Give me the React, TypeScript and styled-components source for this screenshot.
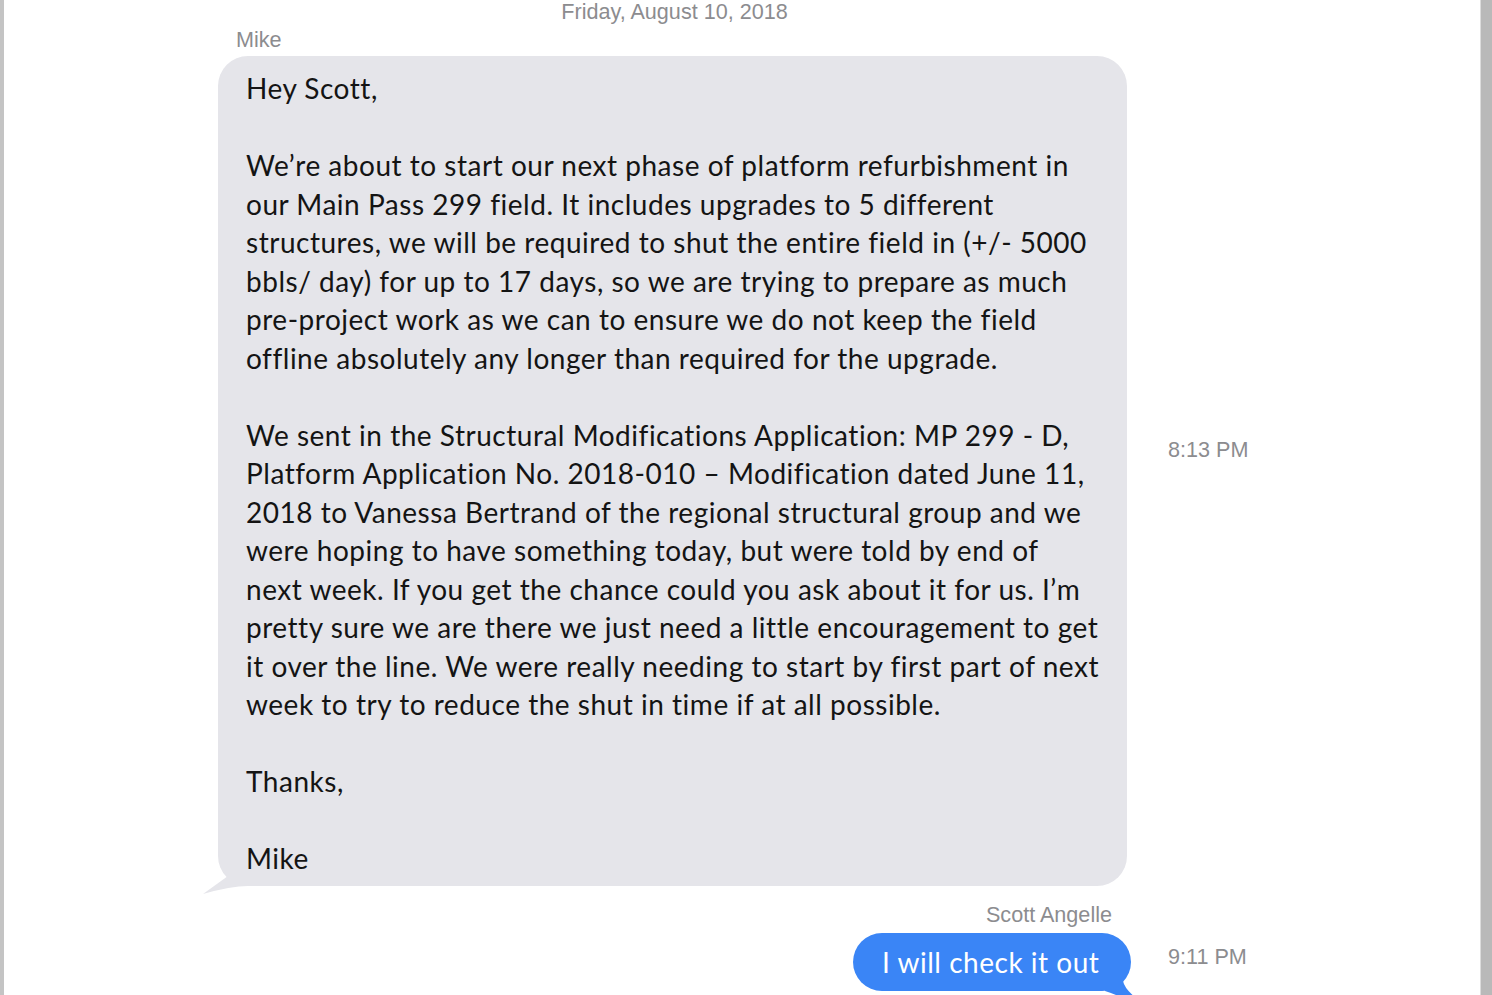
import React from "react";
import styled, { createGlobalStyle } from "styled-components";

const GlobalStyle = createGlobalStyle`
  html, body {
    margin: 0;
    padding: 0;
    height: 100%;
    overflow: hidden;
    background: #ffffff;
  }
  #root {
    height: 100%;
  }
`;

const Frame = styled.div`
  display: flex;
  height: 995px;
  overflow: hidden;
  background: #ffffff;
`;

const LeftEdge = styled.div`
  width: 4px;
  flex: none;
  background: #c4c4c4;
`;

const RightEdge = styled.div`
  width: 11px;
  flex: none;
  background: #b9b9b9;
  border-left: 1px solid #dcdcdc;
`;

const Main = styled.div`
  flex: 1;
  padding-left: 214px;
  display: flex;
  flex-direction: column;
`;

const MetaText = styled.div<{ $align?: "left" | "center" | "right" }>`
  font-family: "Liberation Sans", Arial, sans-serif;
  font-size: 21.6px;
  line-height: 24px;
  color: #8c8c8f;
  text-align: ${(p) => p.$align ?? "left"};
`;

const DateHeader = styled(MetaText)`
  width: 913px;
  margin-top: 0px;
`;

const SenderName = styled(MetaText)`
  width: 913px;
  box-sizing: border-box;
  padding: ${(p) => (p.$align === "right" ? "0 19px 0 0" : "0 0 0 18px")};
  margin-top: ${(p) => (p.$align === "right" ? "17px" : "4px")};
`;

const Row = styled.div`
  display: grid;
  grid-template-columns: 913px auto;
  column-gap: 37px;
`;

const Bubble = styled.div<{ $out?: boolean }>`
  position: relative;
  box-sizing: border-box;
  font-family: "Lato", "Open Sans", sans-serif;
  font-size: 28px;
  line-height: 38.5px;
  letter-spacing: 0.52px;
  font-variant-ligatures: none;
  justify-self: ${(p) => (p.$out ? "end" : "start")};
  background: ${(p) => (p.$out ? "#3a85f6" : "#e5e5ea")};
  color: ${(p) => (p.$out ? "#ffffff" : "#141414")};
  border-radius: ${(p) => (p.$out ? "29px" : "30px")};
  width: ${(p) => (p.$out ? "278px" : "909px")};
  padding: ${(p) => (p.$out ? "10px 0 10px 29px" : "13px 0 8px 28px")};
  margin-top: ${(p) => (p.$out ? "6px" : "4px")};
`;

const Paragraph = styled.div`
  & + & {
    margin-top: 38.5px;
  }
`;

const Line = styled.div`
  white-space: nowrap;
`;

const Tail = styled.svg<{ $out?: boolean }>`
  position: absolute;
  ${(p) =>
    p.$out
      ? `right: -14px; bottom: -12px;`
      : `left: -15px; bottom: -9px;`}
`;

const Time = styled(MetaText)<{ $lift: number }>`
  align-self: center;
  margin-bottom: ${(p) => p.$lift}px;
`;

const paragraphs: string[][] = [
  ["Hey Scott,"],
  [
    "We\u2019re about to start our next phase of platform refurbishment in",
    "our Main Pass 299 field. It includes upgrades to 5 different",
    "structures, we will be required to shut the entire field in (+/- 5000",
    "bbls/ day) for up to 17 days, so we are trying to prepare as much",
    "pre-project work as we can to ensure we do not keep the field",
    "offline absolutely any longer than required for the upgrade.",
  ],
  [
    "We sent in the Structural Modifications Application: MP 299 - D,",
    "Platform Application No. 2018-010 \u2013 Modification dated June 11,",
    "2018 to Vanessa Bertrand of the regional structural group and we",
    "were hoping to have something today, but were told by end of",
    "next week. If you get the chance could you ask about it for us. I\u2019m",
    "pretty sure we are there we just need a little encouragement to get",
    "it over the line. We were really needing to start by first part of next",
    "week to try to reduce the shut in time if at all possible.",
  ],
  ["Thanks,"],
  ["Mike"],
];

export default function App() {
  return (
    <>
      <GlobalStyle />
      <Frame>
        <LeftEdge />
        <Main>
          <DateHeader $align="center">Friday, August 10, 2018</DateHeader>
          <SenderName $align="left">Mike</SenderName>
          <Row>
            <Bubble>
              {paragraphs.map((lines, i) => (
                <Paragraph key={i}>
                  {lines.map((l, j) => (
                    <Line key={j}>{l}</Line>
                  ))}
                </Paragraph>
              ))}
              <Tail width="50" height="24" viewBox="0 0 50 24">
                <path d="M0 23 L25 5 L45 3 L45 15 Q28 15 0 23 Z" fill="#e5e5ea" />
              </Tail>
            </Bubble>
            <Time $lift={38}>8:13 PM</Time>
          </Row>
          <SenderName $align="right">Scott Angelle</SenderName>
          <Row>
            <Bubble $out>
              <Line>I will check it out</Line>
              <Tail $out width="40" height="24" viewBox="0 0 40 24">
                <path d="M0 2 L18 2 Q20 12 38 24 L30 24 Q12 16 0 12 Z" fill="#3a85f6" />
              </Tail>
            </Bubble>
            <Time $lift={4}>9:11 PM</Time>
          </Row>
        </Main>
        <RightEdge />
      </Frame>
    </>
  );
}
